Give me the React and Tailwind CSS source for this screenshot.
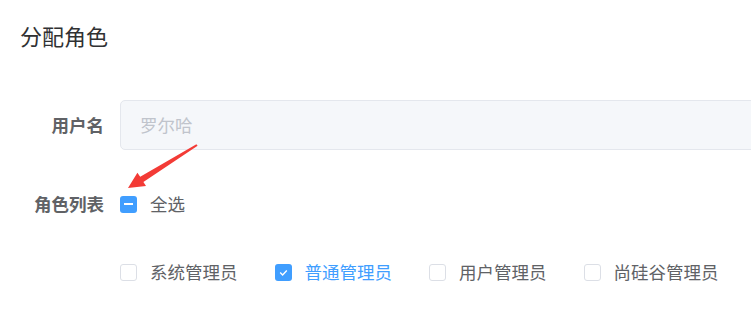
import React from 'react';

const font = { fontFamily: '"Microsoft YaHei", "Noto Sans CJK SC", "Noto Sans", sans-serif' };

const roles = [
  { name: '系统管理员', checked: false },
  { name: '普通管理员', checked: true },
  { name: '用户管理员', checked: false },
  { name: '尚硅谷管理员', checked: false },
];

const Box = ({ state }) => {
  if (state === 'checked') {
    return (
      <span className="flex h-[17px] w-[17px] items-center justify-center rounded-[3px] bg-[#409eff]">
        <svg width="11" height="11" viewBox="0 0 11 11">
          <polyline points="2.2,5.6 4.6,7.9 8.8,3.4" fill="none" stroke="#fff" strokeWidth="1.4" />
        </svg>
      </span>
    );
  }
  if (state === 'half') {
    return (
      <span className="flex h-[17px] w-[17px] items-center justify-center rounded-[3px] bg-[#409eff]">
        <span className="h-[2px] w-[9px] bg-white" />
      </span>
    );
  }
  return <span className="h-[17px] w-[17px] rounded-[3px] border border-[#dcdfe6] bg-white" />;
};

const Check = ({ label, state, className = '' }) => (
  <label className={`flex items-center ${className}`}>
    <Box state={state} />
    <span
      className={`ml-[13px] text-[17.5px] leading-[20px] ${state === 'checked' ? 'text-[#409eff]' : 'text-[#606266]'}`}
    >
      {label}
    </span>
  </label>
);

export default function App() {
  return (
    <div className="relative h-[321px] w-[751px] overflow-hidden bg-white" style={font}>
      <div className="px-[20px] pt-[23px] text-[22px] leading-[24px] text-[#303133]">分配角色</div>

      <div className="mt-[53px] w-[900px]">
        <div className="flex h-[50px] items-center">
          <div className="w-[120px] pr-[16px] text-right text-[17.5px] font-bold text-[#606266]">用户名</div>
          <div className="flex h-[50px] flex-1 items-center rounded-[5px] border border-[#e4e7ed] bg-[#f5f7fa] pl-[19px] text-[17.5px] text-[#c0c4cc]">
            罗尔哈
          </div>
        </div>

        <div className="mt-[29px] flex h-[50px] items-center">
          <div className="w-[120px] pr-[16px] text-right text-[17.5px] font-bold text-[#606266]">角色列表</div>
          <Check label="全选" state="half" />
        </div>

        <div className="mt-[18px] flex h-[50px] items-center pl-[120px]">
          {roles.map((r) => (
            <Check key={r.name} label={r.name} state={r.checked ? 'checked' : 'none'} className="mr-[37px]" />
          ))}
        </div>
      </div>

      <svg className="pointer-events-none absolute inset-0" width="751" height="321">
        <polygon
          points="128,188 137.4,172.8 140.2,176.8 196.4,144.2 197.6,145.8 143.4,182 146,186"
          fill="#f33b36"
        />
      </svg>
    </div>
  );
}
